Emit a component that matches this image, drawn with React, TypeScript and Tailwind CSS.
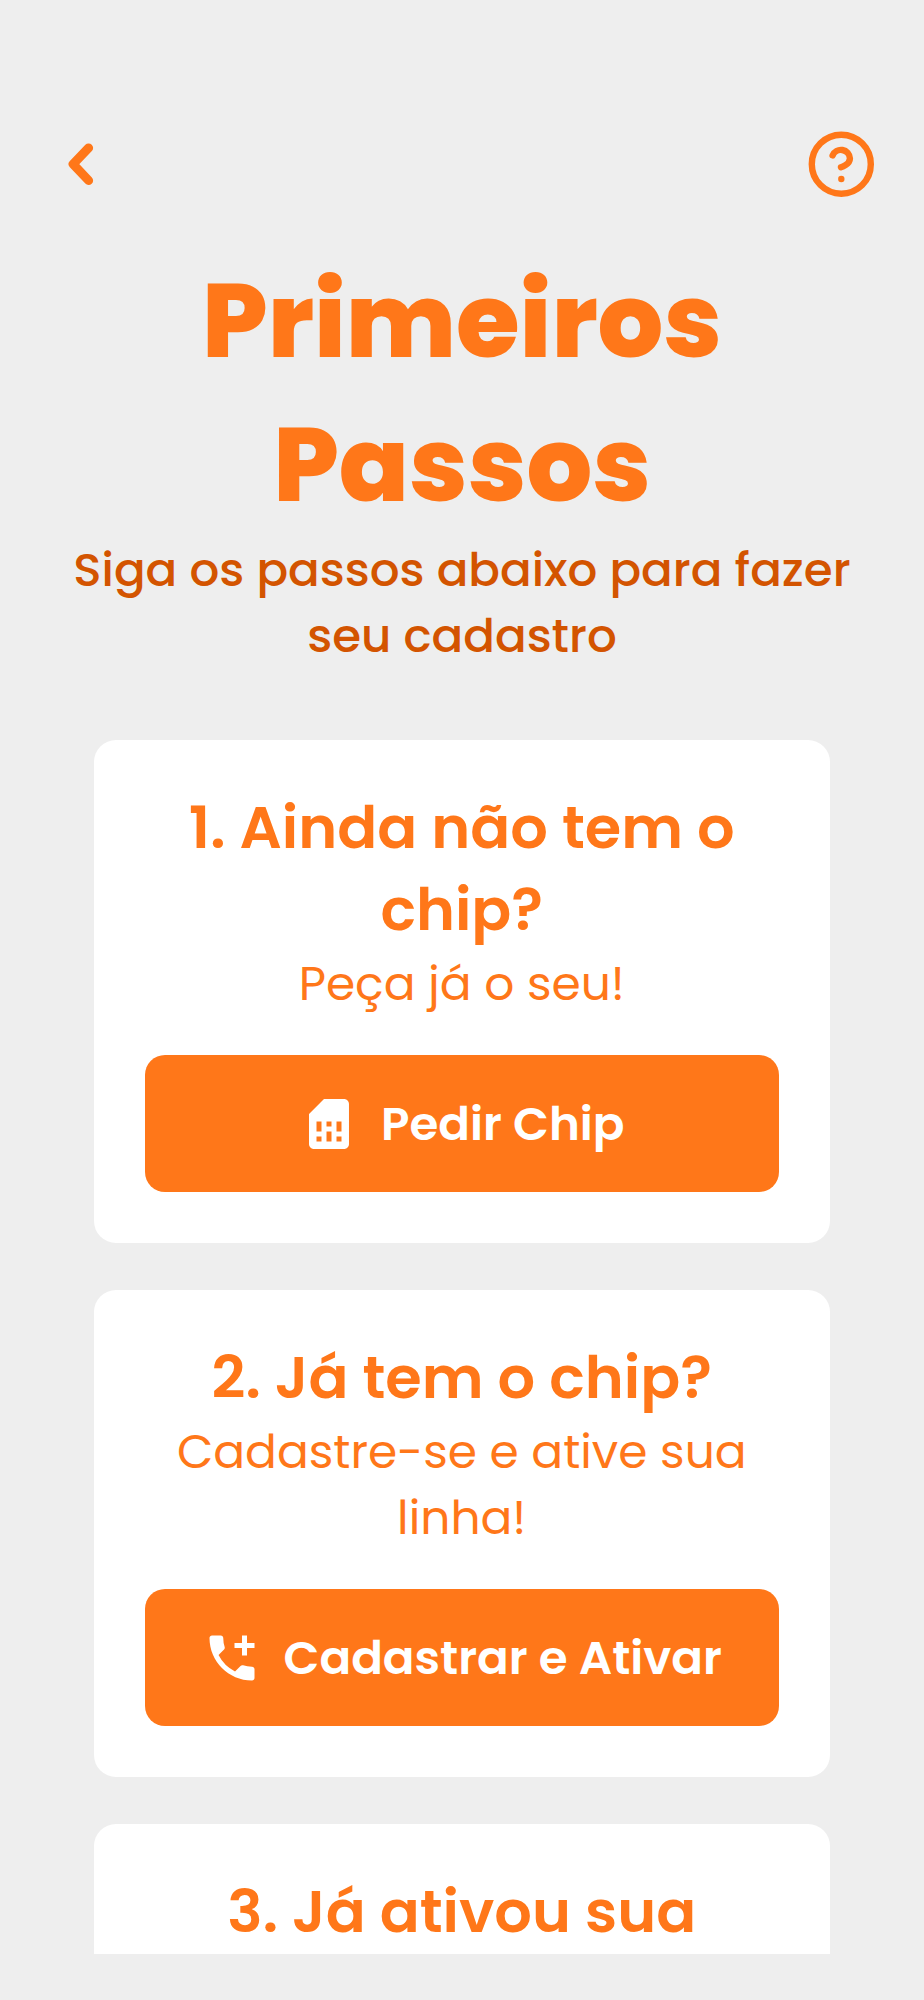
import React from 'react';

// Ícone de voltar
function BackIcon() {
  return (
    <svg width="26" height="44" viewBox="0 0 26 44" fill="none" stroke="currentColor" strokeWidth="9" strokeLinecap="round" strokeLinejoin="round">
      <path d="M20.6 5.9 5.1 22.1l15.5 16.4" />
    </svg>
  );
}

// Ícone de ajuda
function HelpIcon() {
  return (
    <svg width="66" height="66" viewBox="0 0 66 66" fill="none" stroke="currentColor" strokeWidth="6.4" strokeLinecap="round" strokeLinejoin="round">
      <circle cx="33.3" cy="33.2" r="29.5" />
      <path d="M24.6 24.4a9 9 0 0 1 17.3 3c0 6-8.9 8.9-8.9 8.9" />
      <path d="M33.3 48h.03" />
    </svg>
  );
}

// Ícone de chip
function SimIcon() {
  return (
    <svg width="60" height="60" viewBox="0 0 24 24" fill="currentColor">
      <path d="M19.99 4c0-1.1-.89-2-1.99-2h-8L4 8v12c0 1.1.9 2 2 2h12.01c1.1 0 1.99-.9 1.99-2l-.01-16zM9 19H7v-2h2v2zm8 0h-2v-2h2v2zm-8-4H7v-4h2v4zm4 4h-2v-4h2v4zm0-6h-2v-2h2v2zm4 2h-2v-4h2v4z" />
    </svg>
  );
}

// Ícone de telefone com sinal de mais
function PhonePlusIcon() {
  return (
    <svg width="60" height="60" viewBox="0 0 24 24" fill="currentColor">
      <path d="M20 15.5c-1.25 0-2.45-.2-3.57-.57a1.02 1.02 0 0 0-1.02.24l-2.2 2.2a15.045 15.045 0 0 1-6.59-6.58l2.2-2.21c.28-.27.36-.66.25-1.01A11.36 11.36 0 0 1 8.5 4c0-.55-.45-1-1-1H4c-.55 0-1 .45-1 1 0 9.39 7.61 17 17 17 .55 0 1-.45 1-1v-3.5c0-.55-.45-1-1-1z" />
      <path d="M21 6h-3V3h-2v3h-3v2h3v3h2V8h3V6z" />
    </svg>
  );
}

interface Step {
  title: string;
  description: string;
  action: string;
  icon: React.ReactNode;
}

const steps: Step[] = [
  {
    title: '1. Ainda não tem o chip?',
    description: 'Peça já o seu!',
    action: 'Pedir Chip',
    icon: <SimIcon />,
  },
  {
    title: '2. Já tem o chip?',
    description: 'Cadastre-se e ative sua linha!',
    action: 'Cadastrar e Ativar',
    icon: <PhonePlusIcon />,
  },
];

export default function App() {
  return (
    <div className="flex h-[2000px] w-full flex-col overflow-hidden bg-[#eeeeee] pb-[46px] text-[#ff7719] font-['Poppins','Inter',sans-serif]">
      {/* Cabeçalho */}
      <header className="mt-[131px] flex h-[66px] shrink-0 items-center justify-between pr-[50px] pl-[68px]">
        <button aria-label="Voltar"><BackIcon /></button>
        <button aria-label="Ajuda"><HelpIcon /></button>
      </header>

      <main className="flex min-h-0 flex-1 flex-col overflow-hidden pt-[52px] text-center">
        <h1 className="shrink-0 text-[103.3px] leading-[144px] font-extrabold">
          Primeiros
          <br />
          Passos
        </h1>
        <p className="shrink-0 px-[60px] text-[46.75px] leading-[66px] font-medium text-[#d35400]">
          Siga os passos abaixo para fazer seu cadastro
        </p>

        {/* Lista de passos */}
        <div className="mt-[70.6px] flex shrink-0 flex-col gap-[47px] pr-[94.5px] pl-[94px]">
          {steps.map((step) => (
            <section key={step.title} className="rounded-[22px] bg-white px-[50.7px] pt-[47.6px] pb-[50.5px]">
              <h2 className="text-[59px] leading-[82px] font-semibold">{step.title}</h2>
              <p className="px-[20px] text-[47.1px] leading-[66px]">{step.description}</p>
              <button className="mt-[38px] flex h-[137px] w-full items-center justify-center gap-[22px] rounded-[20px] bg-[#ff7719] text-[46.75px] font-semibold whitespace-nowrap text-white">
                {step.icon}
                {step.action}
              </button>
            </section>
          ))}
          <section className="h-[300px] rounded-[22px] bg-white px-[51px] pt-[47px]">
            <h2 className="text-[59px] leading-[82px] font-semibold">3. Já ativou sua</h2>
          </section>
        </div>
      </main>
    </div>
  );
}
